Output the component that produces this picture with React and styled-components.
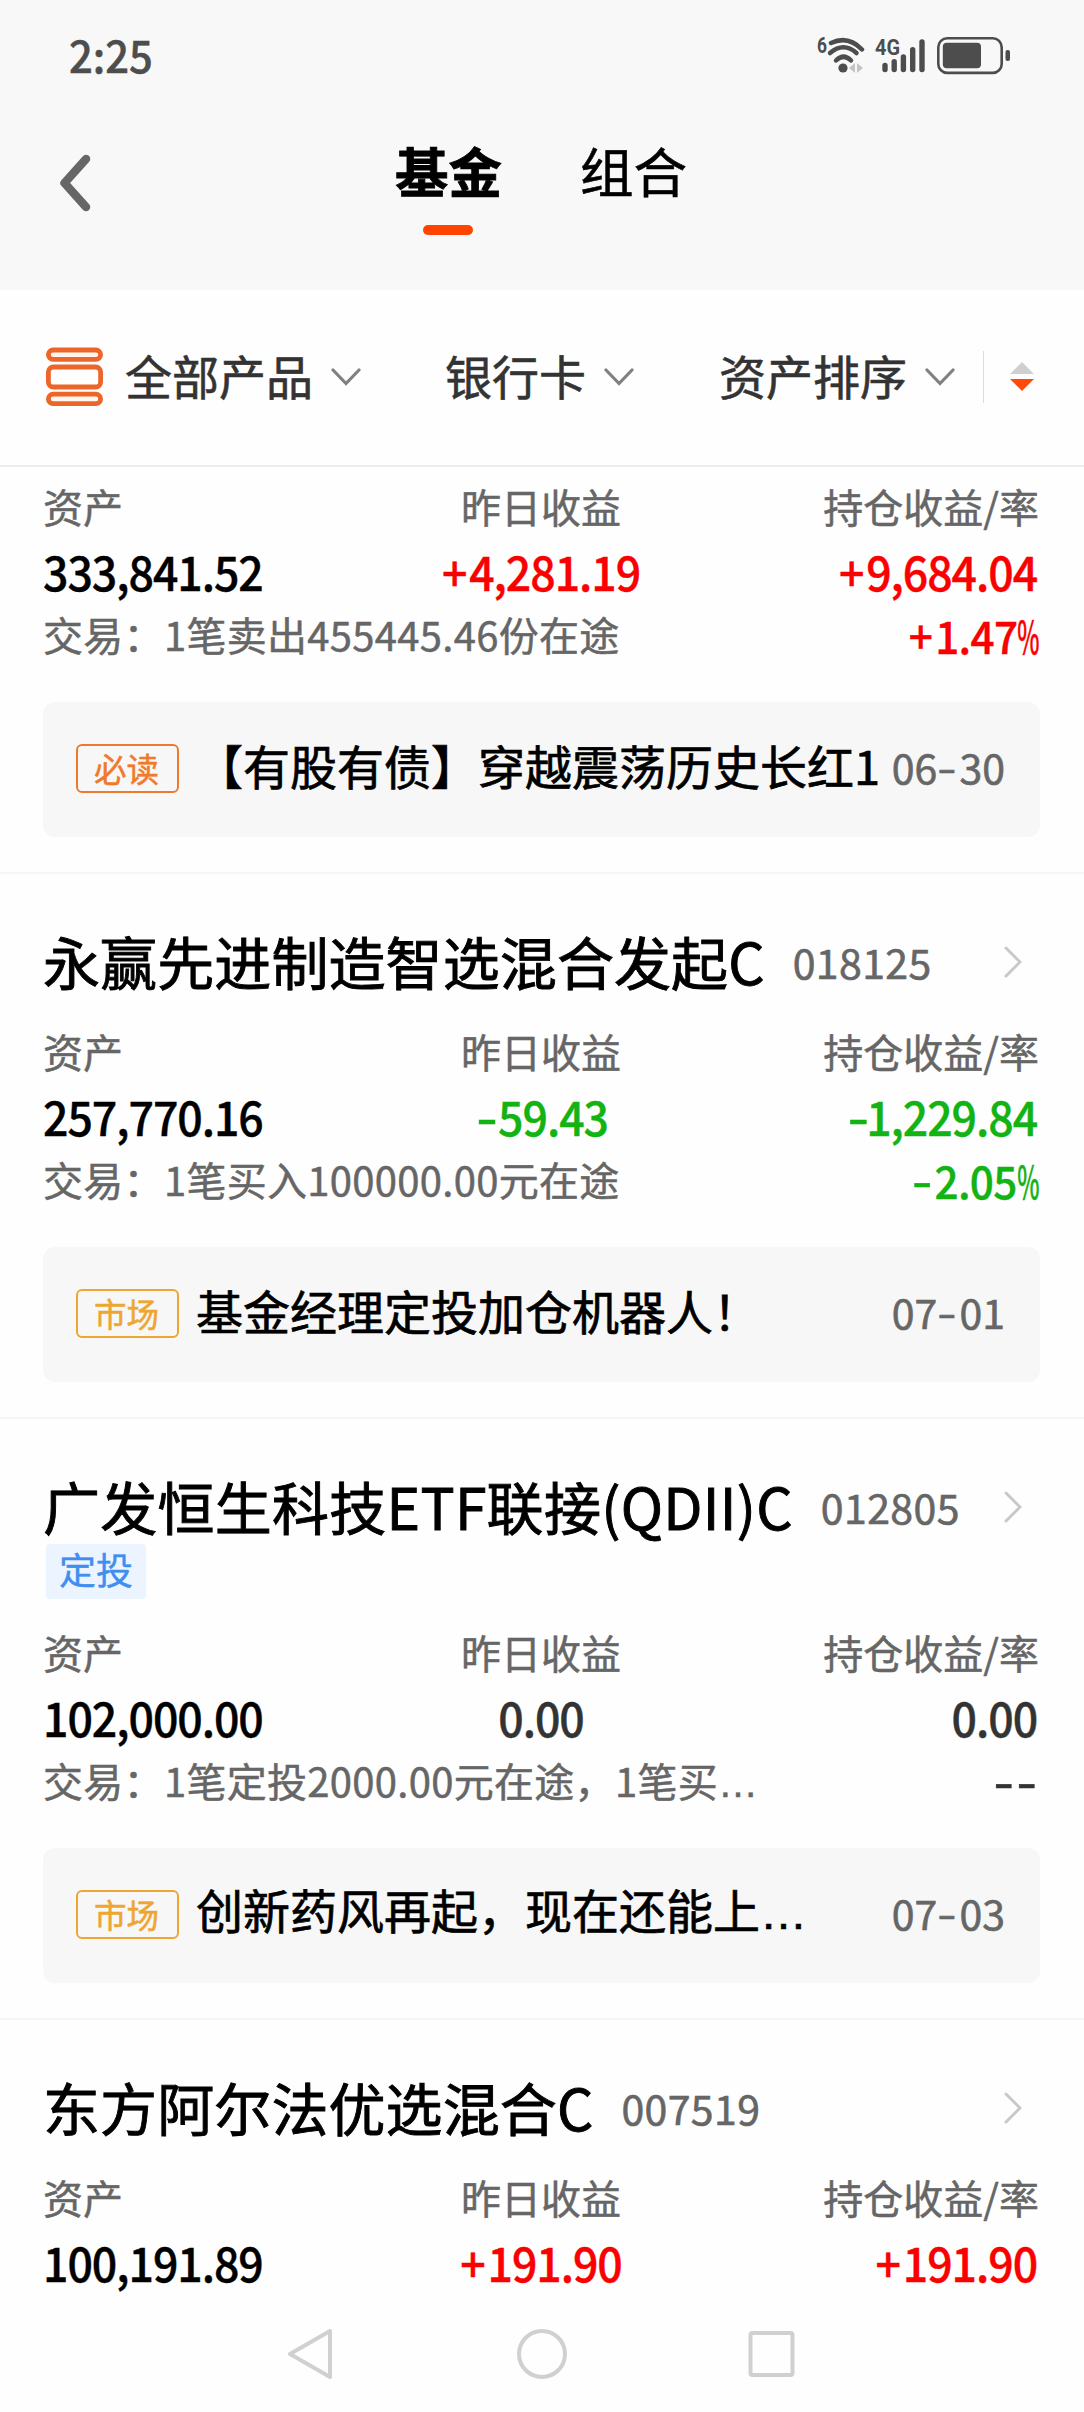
import React from "react";
import styled, { createGlobalStyle } from "styled-components";

const sans = `"Noto Sans CJK SC", "Noto Sans", sans-serif`;

const Global = createGlobalStyle`
  * { box-sizing: border-box; }
  body { margin: 0; background: #fefefe; font-family: ${sans}; color: #000; }
`;

const Screen = styled.div`
  width: 1084px;
  height: 2412px;
  display: flex;
  flex-direction: column;
  overflow: hidden;
  background: #fefefe;
`;

const StatusBar = styled.div`
  height: 110px;
  flex: none;
  display: flex;
  justify-content: space-between;
  align-items: center;
  padding: 0 73px 0 69px;
  background: #f8f8f8;
`;

const Clock = styled.div`
  margin-bottom: 2px;
  font-size: 44px;
  line-height: 50px;
  font-weight: 500;
  color: #4d4d4d;
  transform: scaleX(0.95);
  transform-origin: left;
  -webkit-text-stroke: 0.5px #4d4d4d;
`;

const Header = styled.header`
  height: 180px;
  flex: none;
  display: grid;
  grid-template-columns: 395px 1fr;
  background: #f8f8f8;
`;

const BackSlot = styled.div`
  padding: 43px 0 0 58px;
`;

const Tabs = styled.nav`
  display: flex;
  gap: 78px;
  padding-top: 25px;
`;

const Tab = styled.div`
  display: flex;
  flex-direction: column;
  align-items: center;
  gap: 21px;
  font-size: 53.5px;
  line-height: 69px;
  height: 69px;
  font-weight: ${(p) => (p.$active ? 700 : 400)};
  -webkit-text-stroke: ${(p) => (p.$active ? "0.8px" : "0.6px")} #000;
`;

const TabMark = styled.span`
  width: 50px;
  height: 10px;
  flex: none;
  margin-right: 2px;
  border-radius: 5px;
  background: #ff4400;
`;

const FilterBar = styled.div`
  height: 177px;
  flex: none;
  display: flex;
  align-items: center;
  padding: 0 0 1px 45px;
  border-bottom: 2px solid #ececec;

  svg { flex: none; }
`;

const Filter = styled.div`
  flex: none;
  display: flex;
  align-items: center;
  gap: 18px;
  margin-left: ${(p) => p.$before}px;
  font-size: 47px;
  line-height: 60px;
  white-space: nowrap;
  color: #333;
  -webkit-text-stroke: 0.6px #333;
`;

const FilterName = styled.span`
  padding-bottom: 4px;
`;

const FilterRule = styled.span`
  width: 1px;
  height: 52px;
  margin: 0 26px 0 28px;
  background: #dcdcdc;
`;

const List = styled.main`
  flex: 1;
  min-height: 0;
  overflow: hidden;
`;

const Fund = styled.section`
  padding: ${(p) => (p.$cut ? 9 : 51)}px 45px 35px 43px;
  border-bottom: 2px solid #f5f5f5;
`;

const FundHead = styled.div`
  display: flex;
  align-items: center;
  height: 70px;
  padding-right: 17px;

  svg { margin-top: 3px; }
`;

const FundName = styled.h2`
  margin: 0;
  font-size: 57px;
  line-height: 64px;
  font-weight: 400;
  letter-spacing: ${(p) => p.$track || 0.1}px;
  -webkit-text-stroke: 0.9px #000;
`;

const FundCode = styled.span`
  flex: 1;
  margin-left: 28px;
  padding-top: 2px;
  font-size: 41px;
  line-height: 60px;
  letter-spacing: 0.4px;
  color: #666;
  -webkit-text-stroke: 0.6px #666;
`;

const PlanTag = styled.span`
  display: block;
  width: 100px;
  height: 55px;
  margin: 4px 0 0 3px;
  border-radius: 4px;
  background: #ecf4ff;
  font-size: 37px;
  line-height: 51px;
  text-align: center;
  color: #3f8ef0;
  -webkit-text-stroke: 0.4px #3f8ef0;
`;

const Figures = styled.div`
  display: grid;
  grid-template-columns: 1fr 1fr 1fr;
  padding-top: ${(p) => p.$top}px;
`;

const Cell = styled.div`
  text-align: ${(p) => p.$align};
`;

const Label = styled.div`
  font-size: 40px;
  line-height: 60px;
  color: #666;
  -webkit-text-stroke: 0.5px #666;
`;

const tones = { ink: "#000", flat: "#333", up: "#fa0000", down: "#12b312" };

const Amount = styled.div`
  height: 66px;
  padding-right: ${(p) => (p.$align === "right" ? 2 : 0)}px;
  font-size: 47px;
  line-height: 70px;
  font-weight: 500;
  letter-spacing: -1.1px;
  color: ${(p) => tones[p.$tone]};
  -webkit-text-stroke: 0.4px;
  transform: scaleX(0.95);
  transform-origin: ${(p) => p.$align};
`;

const Trade = styled.div`
  display: flex;
  justify-content: space-between;
  height: 60px;
`;

const TradeText = styled.div`
  font-size: 40px;
  line-height: 64px;
  white-space: pre;
  letter-spacing: 0.3px;
  color: #666;
  -webkit-text-stroke: 0.5px #666;
`;

const Dots = styled.span`
  font-family: "Liberation Sans", sans-serif;
`;

const Rate = styled.div`
  font-size: 44.5px;
  line-height: 65px;
  font-weight: 500;
  letter-spacing: -0.7px;
  color: ${(p) => tones[p.$tone]};
  -webkit-text-stroke: 0.4px;
  transform: scaleX(0.95);
  transform-origin: right;
`;

const Percent = styled.span`
  display: inline-block;
  width: 23px;
  transform: scaleX(0.56);
  transform-origin: left;
`;

const Plus = styled.span`
  margin-right: 3px;
`;

const Dash = styled.span`
  display: inline-block;
  width: 0.51em;
  letter-spacing: 0;
  text-indent: 0.07em;
  margin-right: 0.03em;
  transform: translateY(-0.03em) scaleX(1.35);
`;

const News = styled.article`
  display: flex;
  align-items: center;
  height: 135px;
  margin: 40px -1px 0 0;
  padding: 0 35px 0 33px;
  border-radius: 12px;
  background: #f7f7f7;
`;

const NewsTag = styled.span`
  flex: none;
  width: 103px;
  height: 49px;
  margin-bottom: 2px;
  padding-right: 2px;
  border: 2px solid ${(p) => p.$color};
  border-radius: 6px;
  font-size: 32.5px;
  line-height: 43px;
  text-align: center;
  color: ${(p) => p.$color};
  -webkit-text-stroke: 0.5px;
`;

const NewsTitle = styled.span`
  flex: 1;
  margin-left: 17px;
  padding-bottom: 10px;
  font-size: 47px;
  line-height: 64px;
  white-space: nowrap;
  -webkit-text-stroke: 0.7px #000;
`;

const NewsDate = styled.span`
  padding-bottom: 8px;
  font-size: 41px;
  line-height: 60px;
  color: #666;
  -webkit-text-stroke: 0.6px #666;
`;

const NavBar = styled.footer`
  height: 114px;
  flex: none;
  display: flex;
  justify-content: center;
  align-items: center;
  gap: 180px;
  padding-bottom: 2px;
  background: #fefefe;
`;

const Chevron = () => (
  <svg width="30" height="18" viewBox="0 0 30 18" fill="none" stroke="#808080" strokeWidth="3.2" strokeLinecap="round">
    <path d="M2 2 L15 15.5 L28 2" />
  </svg>
);

const Arrow = () => (
  <svg width="18" height="32" viewBox="0 0 18 32" fill="none" stroke="#c8c8c8" strokeWidth="3" strokeLinecap="round">
    <path d="M2 2 L16 16 L2 30" />
  </svg>
);

const StatusIcons = () => (
  <svg width="198" height="44" viewBox="813 33 198 44" fill="none" stroke="#4d4d4d">
    <text x="817" y="53" fontSize="22.5" fontWeight="700" fill="#4d4d4d" stroke="none" fontFamily="Roboto, sans-serif" textLength="10" lengthAdjust="spacingAndGlyphs">6</text>
    <g strokeWidth="4.5" strokeLinecap="round">
      <path d="M831 43 Q848 35 862 49.5" />
      <path d="M830 53 Q843.5 41.5 856.5 53" />
      <path d="M836 60.5 Q843.5 53 851 60.5" />
    </g>
    <circle cx="843" cy="68" r="4.6" fill="#4d4d4d" stroke="none" />
    <path d="M849 68 L855 63 V73 Z M857 63 V73 L863 68 Z" fill="#c4c4c4" stroke="none" />
    <text x="875" y="55" fontSize="22.5" fontWeight="700" fill="#4d4d4d" stroke="none" fontFamily="Roboto, sans-serif" textLength="25" lengthAdjust="spacingAndGlyphs">4G</text>
    <g strokeWidth="5.4" strokeLinecap="round">
      <path d="M885 65.4 V69.5 M894.2 61.7 V69.5 M903.4 57 V69.5 M912.7 49.7 V69.5 M922 42 V69.5" />
    </g>
    <rect x="938.3" y="38.3" width="63.4" height="34.6" rx="9" strokeWidth="2.6" />
    <rect x="942.8" y="42.8" width="38.2" height="25.4" rx="4" fill="#4d4d4d" stroke="none" />
    <rect x="1005.5" y="50" width="4.5" height="11" rx="2" fill="#4d4d4d" stroke="none" />
  </svg>
);

const ProductsIcon = () => (
  <svg width="59" height="60" viewBox="0 0 59 60" fill="#fff6ef" stroke="#ec652b" strokeWidth="4.8">
    <rect x="3.4" y="3" width="52.2" height="9.4" rx="4.7" />
    <rect x="3.4" y="20" width="52.2" height="20" rx="5" fill="#fff" />
    <rect x="3.4" y="47.2" width="52.2" height="9.4" rx="4.7" />
  </svg>
);

const funds = [
  {
    cut: true,
    asset: "333,841.52", day: "+4,281.19", dayTone: "up",
    held: "+9,684.04", rate: "+1.47%", heldTone: "up",
    trade: "交易：1笔卖出455445.46份在途",
    news: { tag: "必读", color: "#f07a2c", title: "【有股有债】穿越震荡历史长红1", date: "06-30" },
  },
  {
    name: "永赢先进制造智选混合发起C", code: "018125",
    asset: "257,770.16", day: "-59.43", dayTone: "down",
    held: "-1,229.84", rate: "-2.05%", heldTone: "down",
    trade: "交易：1笔买入100000.00元在途",
    news: { tag: "市场", color: "#eda632", title: "基金经理定投加仓机器人！", date: "07-01" },
  },
  {
    name: "广发恒生科技ETF联接(QDII)C", code: "012805", plan: "定投", track: 0.27,
    asset: "102,000.00", day: "0.00", dayTone: "flat",
    held: "0.00", rate: "--", heldTone: "flat",
    trade: "交易：1笔定投2000.00元在途，1笔买…",
    news: { tag: "市场", color: "#eda632", title: "创新药风再起，现在还能上…", date: "07-03" },
  },
  {
    name: "东方阿尔法优选混合C", code: "007519",
    asset: "100,191.89", day: "+191.90", dayTone: "up",
    held: "+191.90", heldTone: "up",
  },
];

const marks = { "-": Dash, "%": Percent, "…": Dots, "+": Plus };

function Glyphs({ text }) {
  return text.split(/([-+%…])/).filter(Boolean).map((part, i) => {
    const Mark = marks[part];
    return Mark ? <Mark key={i}>{part}</Mark> : part;
  });
}

function Figure({ label, value, tone, align }) {
  return (
    <Cell $align={align}>
      <Label>{label}</Label>
      <Amount $tone={tone} $align={align}><Glyphs text={value} /></Amount>
    </Cell>
  );
}

function FundItem({ fund }) {
  return (
    <Fund $cut={fund.cut}>
      {fund.name && (
        <FundHead>
          <FundName $track={fund.track}>{fund.name}</FundName>
          <FundCode>{fund.code}</FundCode>
          <Arrow />
        </FundHead>
      )}
      {fund.plan && <PlanTag>{fund.plan}</PlanTag>}
      <Figures $top={fund.cut ? 0 : fund.plan ? 23 : 26}>
        <Figure label="资产" value={fund.asset} tone="ink" align="left" />
        <Figure label="昨日收益" value={fund.day} tone={fund.dayTone} align="center" />
        <Figure label="持仓收益/率" value={fund.held} tone={fund.heldTone} align="right" />
      </Figures>
      {fund.trade && (
        <Trade>
          <TradeText><Glyphs text={fund.trade} /></TradeText>
          <Rate $tone={fund.heldTone}><Glyphs text={fund.rate} /></Rate>
        </Trade>
      )}
      {fund.news && (
        <News>
          <NewsTag $color={fund.news.color}>{fund.news.tag}</NewsTag>
          <NewsTitle><Glyphs text={fund.news.title} /></NewsTitle>
          <NewsDate><Glyphs text={fund.news.date} /></NewsDate>
        </News>
      )}
    </Fund>
  );
}

export default function App() {
  return (
    <Screen>
      <Global />
      <StatusBar>
        <Clock>2:25</Clock>
        <StatusIcons />
      </StatusBar>
      <Header>
        <BackSlot>
          <svg width="36" height="60" viewBox="0 0 36 60" fill="none" stroke="#666" strokeWidth="8.5" strokeLinecap="round" strokeLinejoin="round">
            <path d="M28 6 L6.5 30 L28 54" />
          </svg>
        </BackSlot>
        <Tabs>
          <Tab $active>
            基金
            <TabMark />
          </Tab>
          <Tab>组合</Tab>
        </Tabs>
      </Header>
      <FilterBar>
        <ProductsIcon />
        <Filter $before={21}><FilterName>全部产品</FilterName><Chevron /></Filter>
        <Filter $before={84}><FilterName>银行卡</FilterName><Chevron /></Filter>
        <Filter $before={85}><FilterName>资产排序</FilterName><Chevron /></Filter>
        <FilterRule />
        <svg width="24" height="30" viewBox="0 0 24 30">
          <path d="M12 0 L24 12 H0 Z" fill="#cfcfcf" />
          <path d="M0 17 H24 L12 29 Z" fill="#ff4a0a" />
        </svg>
      </FilterBar>
      <List>
        {funds.map((fund) => (
          <FundItem key={fund.asset} fund={fund} />
        ))}
      </List>
      <NavBar>
        <svg width="50" height="52" viewBox="0 0 50 52" fill="none" stroke="#d0d0d0" strokeWidth="4" strokeLinejoin="round">
          <path d="M44 3 V49 L4 26 Z" />
        </svg>
        <svg width="52" height="52" viewBox="0 0 52 52" fill="none" stroke="#d0d0d0" strokeWidth="4">
          <circle cx="26" cy="26" r="23" />
        </svg>
        <svg width="50" height="52" viewBox="0 0 50 52" fill="none" stroke="#d0d0d0" strokeWidth="4">
          <rect x="2.5" y="5" width="42" height="42" rx="2" />
        </svg>
      </NavBar>
    </Screen>
  );
}
